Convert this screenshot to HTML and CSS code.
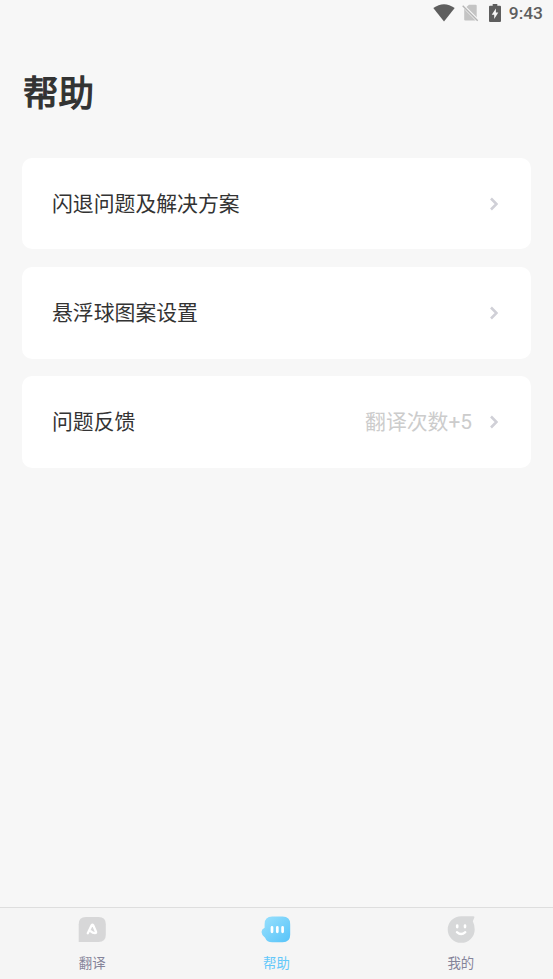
FILE: index.html
```html
<!DOCTYPE html>
<html lang="zh-CN">
<head>
<meta charset="utf-8">
<title>帮助</title>
<link rel="stylesheet" href="styles.css">
</head>
<body>
<div class="app">
  <header class="status">
    <svg class="wifi" width="22" height="18" viewBox="0 0 22 18"><path d="M.3 4.1Q11-3.7 21.7 4.1L11 17.5Z" fill="#5e5e5e"/></svg>
    <svg class="sim" width="17" height="18" viewBox="0 0 17 18"><path d="M2.2 5.1L7 .7h6.7q1 0 1 1v12.9ZM2.2 5.1L13.7 16.6H3.2q-1 0-1-1Z" fill="#c4c4c4"/><path d="M.7 1.2l15.5 15.6" stroke="#f7f7f7" stroke-width="3"/><path d="M.7 1.7l15 15" stroke="#b5b5b5" stroke-width="1.4"/></svg>
    <svg class="battery" width="12" height="18" viewBox="0 0 12 18"><path d="M1 1.8h2.7V0h4.6v1.8H11q1 0 1 1V17q0 1-1 1H1q-1 0-1-1V2.8q0-1 1-1Z" fill="#5e5e5e"/><path d="M6.9 4.4L2.7 10.7h2.5v4.4l4.1-6.5H6.9Z" fill="#f7f7f7"/></svg>
    <span class="time">9:43</span>
  </header>
  <h1 class="title">帮助</h1>
  <main class="list">
    <section class="card"><span class="label">闪退问题及解决方案</span><svg class="chevron" width="8" height="14" viewBox="0 0 8 14"><path d="M1 1.5L6.5 7 1 12.5"/></svg></section>
    <section class="card"><span class="label">悬浮球图案设置</span><svg class="chevron" width="8" height="14" viewBox="0 0 8 14"><path d="M1 1.5L6.5 7 1 12.5"/></svg></section>
    <section class="card"><span class="label">问题反馈</span><span class="hint">翻译次数+5</span><svg class="chevron" width="8" height="14" viewBox="0 0 8 14"><path d="M1 1.5L6.5 7 1 12.5"/></svg></section>
  </main>
  <nav class="tabs">
    <div class="tab">
      <svg width="30" height="28" viewBox="0 0 30 28"><path d="M1.7 26V8.2Q1.7 1 8.9 1h12.7q7.2 0 7.2 7.2v10.6q0 7.2-7.2 7.2Z" fill="#d7d7d8"/><path d="M10.8 17.3L14.6 9.2q.8-.9 1.6 0l2.8 6.5q.4 1.4-1 1.4-2.4 0-4.4-1.9" fill="none" stroke="#fff" stroke-width="2.3" stroke-linecap="round" stroke-linejoin="round"/></svg>
      <span>翻译</span>
    </div>
    <div class="tab active">
      <svg width="30" height="28" viewBox="0 0 30 28"><defs><linearGradient id="blue" x1="0" y1="0" x2="1" y2="1"><stop offset="0" stop-color="#9be1fd"/><stop offset="1" stop-color="#56c3f9"/></linearGradient></defs><path d="M11.2.6h10.4q7.6 0 7.6 7.6v10.5q0 7.6-7.6 7.6H11.2q-5.4 0-7.1-4.6Q.5 18.8.5 15.9q0-2.6 3.1-4.1V8.2Q3.6.6 11.2.6Z" fill="url(#blue)"/><path d="M11 11.4v4.4M16.3 11.4v4.4M21.6 11.4v4.4" stroke="#fff" stroke-width="2.7" stroke-linecap="round"/></svg>
      <span>帮助</span>
    </div>
    <div class="tab">
      <svg width="30" height="28" viewBox="0 0 30 28"><path d="M15.2.2h12.2q1.6 0 .9 1.5l-1.5 3.6Q28.7 9 28.7 13.5a13.5 13.3 0 1 1-13.5-13.3Z" fill="#d7d8d9"/><path d="M11.2 9.5v1.6M19 9.5v1.6" stroke="#fff" stroke-width="2.6" stroke-linecap="round"/><path d="M10.9 16.2q4.2 3.7 8.4 0" fill="none" stroke="#fff" stroke-width="2.3" stroke-linecap="round"/></svg>
      <span>我的</span>
    </div>
  </nav>
</div>
</body>
</html>
```
FILE: styles.css
```css
* { box-sizing: border-box; }
body { margin: 0; background: #f7f7f7; color: #333; font-family: Roboto, "Noto Sans CJK SC", sans-serif; }
.app { height: 979px; display: flex; flex-direction: column; overflow: hidden; }
.status { height: 27px; display: flex; align-items: flex-start; padding: 4px 10px 0 0; justify-content: flex-end; color: #5e5e5e; }
.sim { margin-left: 7px; }
.battery { margin: 0 8.5px 0 10px; }
.time { font-size: 17.4px; line-height: 18px; font-weight: 500; margin-left: -.5px; }
.title { margin: 39px 0 0 23px; height: 56px; font-size: 35.5px; line-height: 56px; font-weight: 400; -webkit-text-stroke: 1.2px #333; }
.list { margin: 35.7px 22px 0; display: flex; flex-direction: column; gap: 17.7px; }
.card { height: 91.6px; border-radius: 10px; background: #fff; display: flex; align-items: center; padding: .8px 33px 0 30px; }
.label { flex: 1; font-size: 20.85px; line-height: 30px; }
.hint { font-size: 20.85px; line-height: 30px; color: #ccc; margin-right: 18px; }
.chevron { fill: none; stroke: #d0d0d7; stroke-width: 2.6; }
.tabs { margin-top: auto; height: 72px; border-top: 1px solid #dedede; background: #f5f5f5; display: flex; }
.tab { flex: 1; display: flex; flex-direction: column; align-items: center; padding-top: 8px; color: #85849a; font-size: 13.4px; line-height: 20px; }
.tab span { margin-top: 10px; }
.active { color: #63c8fa; }
```
